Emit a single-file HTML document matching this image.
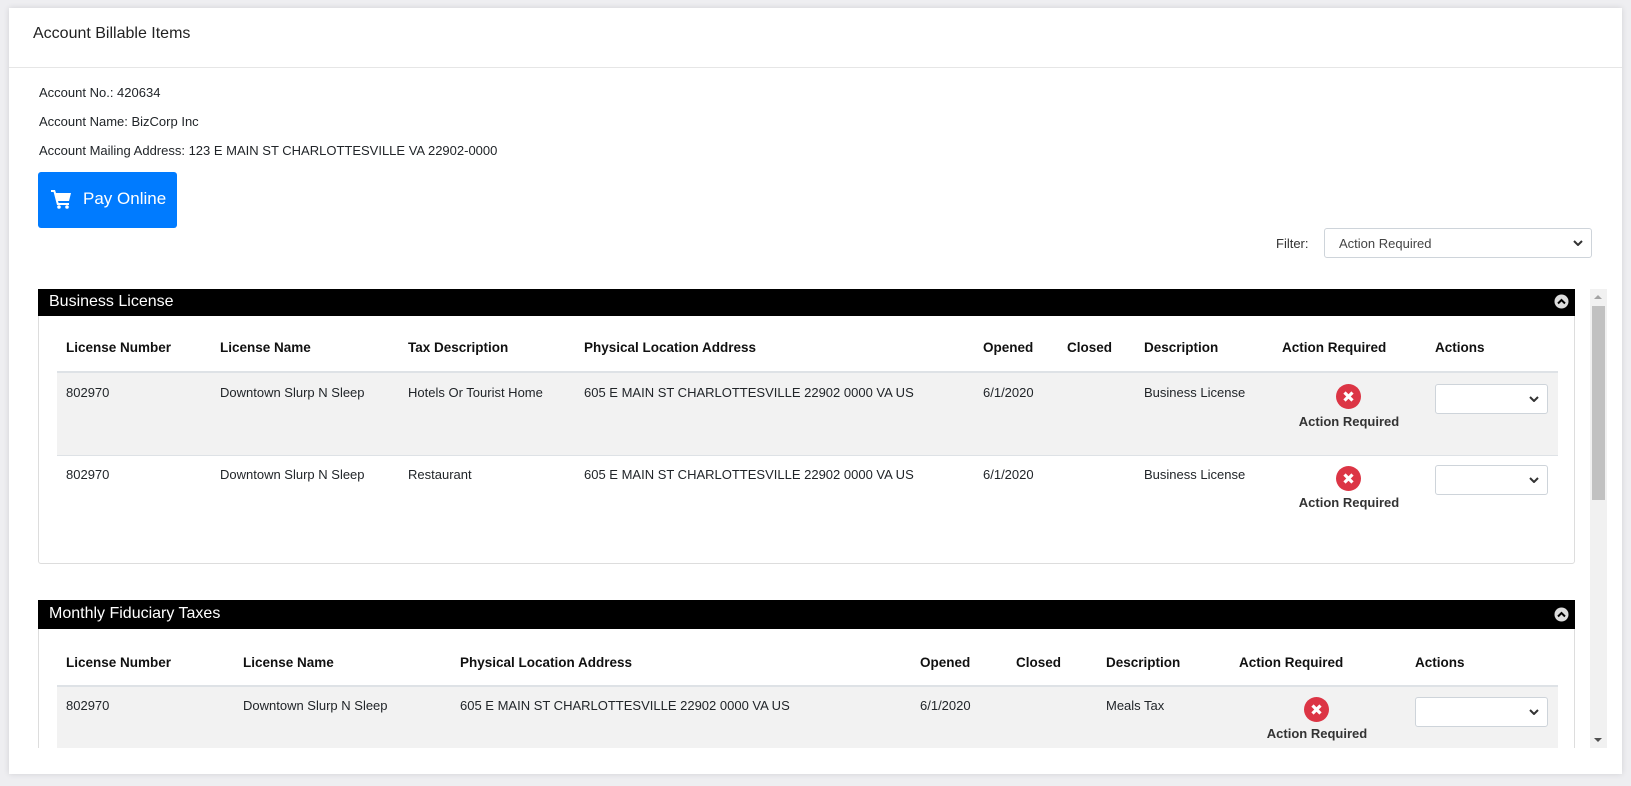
<!DOCTYPE html>
<html><head><meta charset="utf-8"><style>
*{box-sizing:border-box;margin:0;padding:0}
body{width:1631px;height:786px;background:#eeeef1;font-family:"Liberation Sans",Arial,sans-serif;color:#212529;position:relative;overflow:hidden}
.a{position:absolute;white-space:nowrap}
.card{position:absolute;left:9px;top:8px;width:1613px;height:766px;background:#fff;box-shadow:0 0 6px rgba(0,0,0,.12)}
.t{font-size:13px}
.th{font-size:13.5px;font-weight:bold;color:#111}
.bar{position:absolute;left:38px;width:1537px;background:#000;color:#fff;font-size:16px}
.sel{position:absolute;background:#fff;border:1px solid #ced4da;border-radius:3px}
.sel svg{position:absolute;right:8px;top:50%;margin-top:-3px}
.x{position:absolute;width:25px;height:25px;border-radius:50%;background:#dc3545}
.x svg{position:absolute;left:0;top:0}
.ar{font-size:13px;font-weight:bold;color:#333;transform:translateX(-50%)}
</style></head><body>
<div class="card"></div>
<div class="a" style="left:33px;top:25px;font-size:16px;color:#222">Account Billable Items</div>
<div class="a" style="left:9px;top:67px;width:1613px;height:1px;background:#e6e6e6"></div>
<div class="a t" style="left:39px;top:85px">Account No.: 420634</div>
<div class="a t" style="left:39px;top:114px">Account Name: BizCorp Inc</div>
<div class="a t" style="left:39px;top:143px">Account Mailing Address: 123 E MAIN ST CHARLOTTESVILLE VA 22902-0000</div>
<div class="a" style="left:38px;top:172px;width:139px;height:56px;background:#007bff;border-radius:3px;color:#fff;font-size:17px">
<svg style="position:absolute;left:13px;top:17px" width="21" height="20" viewBox="0 0 21 20"><path d="M0 1h4l1 3h15l-2 8H7l.6 2H18v2H6L2.6 3H0z" fill="#fff"/><circle cx="8" cy="18" r="1.8" fill="#fff"/><circle cx="16" cy="18" r="1.8" fill="#fff"/></svg>
<span style="position:absolute;left:45px;top:17px">Pay Online</span></div>
<div class="a t" style="left:1276px;top:236px;color:#333">Filter:</div>
<div class="sel" style="left:1324px;top:228px;width:268px;height:30px"><span class="a t" style="left:14px;top:7px;color:#444">Action Required</span><svg width="10" height="6"><path d="M1 1l4 4 4-4" stroke="#333" stroke-width="2" fill="none"/></svg></div>

<!-- scroll area -->
<div class="a" style="left:38px;top:289px;width:1570px;height:459px;overflow:hidden">
 <div class="a" style="left:0;top:0;width:1537px;height:275px;border:1px solid #ddd;border-radius:3px"></div>
 <div class="a" style="left:0;top:311px;width:1537px;height:200px;border:1px solid #ddd"></div>
</div>
<div class="a" style="left:1590px;top:289px;width:17px;height:459px;background:#f1f1f1"></div>
<div class="a" style="left:1592px;top:306px;width:13px;height:194px;background:#c1c1c1"></div>
<div class="a" style="left:1594px;top:295px;width:0;height:0;border:4px solid transparent;border-bottom:4px solid #a3a3a3;border-top:0"></div>
<div class="a" style="left:1594px;top:738px;width:0;height:0;border:4px solid transparent;border-top:4px solid #505050;border-bottom:0"></div>

<div class="bar" style="top:289px;height:27px"><span class="a" style="left:11px;top:4px">Business License</span></div>
<div class="bar" style="top:600px;height:29px"><span class="a" style="left:11px;top:5px">Monthly Fiduciary Taxes</span></div>
<svg class="a" style="left:1554px;top:294px" width="15" height="15"><circle cx="7.5" cy="7.5" r="7" fill="#ddd"/><path d="M4 9.5l3.5-3.5 3.5 3.5" stroke="#000" stroke-width="2" fill="none"/></svg>
<svg class="a" style="left:1554px;top:607px" width="15" height="15"><circle cx="7.5" cy="7.5" r="7" fill="#ddd"/><path d="M4 9.5l3.5-3.5 3.5 3.5" stroke="#000" stroke-width="2" fill="none"/></svg>

<!-- table 1 -->
<div class="a th" style="left:66px;top:340px">License Number</div>
<div class="a th" style="left:220px;top:340px">License Name</div>
<div class="a th" style="left:408px;top:340px">Tax Description</div>
<div class="a th" style="left:584px;top:340px">Physical Location Address</div>
<div class="a th" style="left:983px;top:340px">Opened</div>
<div class="a th" style="left:1067px;top:340px">Closed</div>
<div class="a th" style="left:1144px;top:340px">Description</div>
<div class="a th" style="left:1282px;top:340px">Action Required</div>
<div class="a th" style="left:1435px;top:340px">Actions</div>
<div class="a" style="left:57px;top:371px;width:1501px;height:2px;background:#dee2e6"></div>
<div class="a" style="left:57px;top:373px;width:1501px;height:82px;background:#f2f2f2"></div>
<div class="a" style="left:57px;top:455px;width:1501px;height:1px;background:#dee2e6"></div>

<div class="a t" style="left:66px;top:385px">802970</div>
<div class="a t" style="left:220px;top:385px">Downtown Slurp N Sleep</div>
<div class="a t" style="left:408px;top:385px">Hotels Or Tourist Home</div>
<div class="a t" style="left:584px;top:385px">605 E MAIN ST CHARLOTTESVILLE 22902 0000 VA US</div>
<div class="a t" style="left:983px;top:385px">6/1/2020</div>
<div class="a t" style="left:1144px;top:385px">Business License</div>
<div class="x" style="left:1336px;top:384px"><svg width="25" height="25"><path d="M8.5 8.5l8 8M16.5 8.5l-8 8" stroke="#fff" stroke-width="3.2"/></svg></div>
<div class="a ar" style="left:1349px;top:414px">Action Required</div>
<div class="sel" style="left:1435px;top:384px;width:113px;height:30px"><svg width="10" height="6"><path d="M1 1l4 4 4-4" stroke="#333" stroke-width="2" fill="none"/></svg></div>

<div class="a t" style="left:66px;top:467px">802970</div>
<div class="a t" style="left:220px;top:467px">Downtown Slurp N Sleep</div>
<div class="a t" style="left:408px;top:467px">Restaurant</div>
<div class="a t" style="left:584px;top:467px">605 E MAIN ST CHARLOTTESVILLE 22902 0000 VA US</div>
<div class="a t" style="left:983px;top:467px">6/1/2020</div>
<div class="a t" style="left:1144px;top:467px">Business License</div>
<div class="x" style="left:1336px;top:466px"><svg width="25" height="25"><path d="M8.5 8.5l8 8M16.5 8.5l-8 8" stroke="#fff" stroke-width="3.2"/></svg></div>
<div class="a ar" style="left:1349px;top:495px">Action Required</div>
<div class="sel" style="left:1435px;top:465px;width:113px;height:30px"><svg width="10" height="6"><path d="M1 1l4 4 4-4" stroke="#333" stroke-width="2" fill="none"/></svg></div>

<!-- table 2 -->
<div class="a th" style="left:66px;top:655px">License Number</div>
<div class="a th" style="left:243px;top:655px">License Name</div>
<div class="a th" style="left:460px;top:655px">Physical Location Address</div>
<div class="a th" style="left:920px;top:655px">Opened</div>
<div class="a th" style="left:1016px;top:655px">Closed</div>
<div class="a th" style="left:1106px;top:655px">Description</div>
<div class="a th" style="left:1239px;top:655px">Action Required</div>
<div class="a th" style="left:1415px;top:655px">Actions</div>
<div class="a" style="left:57px;top:685px;width:1501px;height:2px;background:#dee2e6"></div>
<div class="a" style="left:57px;top:687px;width:1501px;height:61px;background:#f2f2f2"></div>
<div class="a t" style="left:66px;top:698px">802970</div>
<div class="a t" style="left:243px;top:698px">Downtown Slurp N Sleep</div>
<div class="a t" style="left:460px;top:698px">605 E MAIN ST CHARLOTTESVILLE 22902 0000 VA US</div>
<div class="a t" style="left:920px;top:698px">6/1/2020</div>
<div class="a t" style="left:1106px;top:698px">Meals Tax</div>
<div class="x" style="left:1304px;top:697px"><svg width="25" height="25"><path d="M8.5 8.5l8 8M16.5 8.5l-8 8" stroke="#fff" stroke-width="3.2"/></svg></div>
<div class="a ar" style="left:1317px;top:726px">Action Required</div>
<div class="sel" style="left:1415px;top:697px;width:133px;height:30px"><svg width="10" height="6"><path d="M1 1l4 4 4-4" stroke="#333" stroke-width="2" fill="none"/></svg></div>
<div class="a" style="left:38px;top:748px;width:1552px;height:26px;background:#fff"></div>
</body></html>
